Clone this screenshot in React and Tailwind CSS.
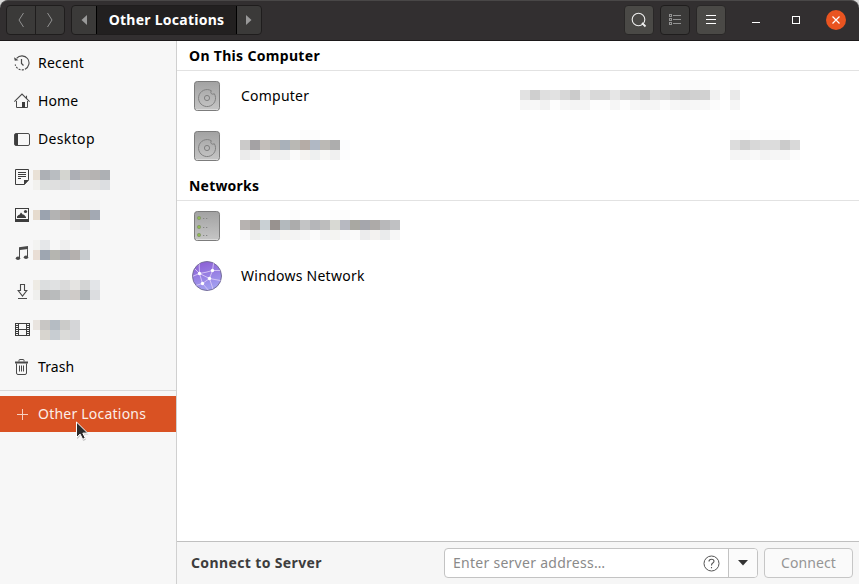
import React from "react";

/* A censored strip of text: rows of 10px cells, [column, y, ...fills]. */
function Mosaic({ width, height, rows, lead = 10, className = "" }) {
  return (
    <svg width={width} height={height} className={`block shrink-0 ${className}`} shapeRendering="crispEdges">
      {rows.map(([col, y, ...fills]) =>
        fills.map((fill, i) => {
          const c = col + i;
          return fill === "" ? null : (
            <rect key={`${c}-${y}`} x={c === 0 ? 0 : lead + (c - 1) * 10} y={y} width={c === 0 ? lead : 10} height={10} fill={fill} />
          );
        })
      )}
    </svg>
  );
}

const icons = {
  recent: (
    <g fill="none" stroke="#4a4a4a">
      <path d="M2.6 3.4A7 7 0 1 1 1.2 9.500" strokeWidth="1.1" strokeDasharray="25 1.2 2 1.2 2 1.2 2 1.2 2 1.2" />
      <path d="M7.5 4v4.5l2 2" strokeWidth="1.2" />
      <path d="M0 2.2l.8 3.5 3.7-.5z" fill="#4a4a4a" stroke="none" />
    </g>
  ),
  home: (
    <g fill="none" stroke="#4a4a4a">
      <path d="M.4 8.6L8 1l7.6 7.6M12.5 2.8v2.4" strokeWidth="1.1" />
      <path d="M2.5 8v6.5h11V8" />
      <path d="M8 9h3v6H8z" fill="#3d3d3d" stroke="none" />
    </g>
  ),
  desktop: (
    <g>
      <rect x=".5" y="2.5" width="15" height="12" rx="1.5" fill="none" stroke="#4a4a4a" />
      <path d="M1 3h3v11H1z" fill="#3d3d3d" />
    </g>
  ),
  documents: (
    <g>
      <path d="M1.5.5h13v10.3l-4.2 4.7H1.5z" fill="none" stroke="#3d3d3d" />
      <path d="M4 3.5h8M4 5.5h8M4 7.5h8M4 9.5h3" stroke="#3d3d3d" />
      <path d="M10 11h5l-5 5z" fill="#3d3d3d" />
    </g>
  ),
  pictures: (
    <g fill="#3d3d3d">
      <path d="M1 1h14v14H1zM2 2v10h12V2z" fillRule="evenodd" />
      <circle cx="11.5" cy="4.5" r="1.6" />
      <path d="M3 11V9.6L4.5 8l1-.3L7 5.5l2 2.3.8-.3L12 10v1z" />
    </g>
  ),
  music: (
    <g fill="#4a4a4a">
      <path d="M5 2.2L14 1v3L6 5v8H5zM13 3h1v9h-1z" />
      <ellipse cx="4" cy="13.2" rx="2.2" ry="1.8" />
      <ellipse cx="12" cy="12.2" rx="2.2" ry="1.8" />
    </g>
  ),
  downloads: (
    <path d="M6.500 1.500h4v6h2.300L8.500 13 4.200 7.500h2.300zM4 15.500h9" fill="none" stroke="#4a4a4a" strokeWidth="1.1" />
  ),
  videos: (
    <g fill="none" stroke="#3d3d3d" shapeRendering="crispEdges">
      <path d="M4.500 2.500h8v12h-8zM4 8.500h9" />
      <path d="M1.500 2v13M15.500 2v13" />
      <path d="M2.500 2v13M3.500 2v13M13.500 2v13M14.500 2v13" strokeDasharray="1 1" />
    </g>
  ),
  trash: (
    <g fill="none" stroke="#4a4a4a">
      <path d="M1 3.500h13" strokeWidth="2" />
      <path d="M5 2.500V1.300q0-.8.800-.8h3.400q.8 0 .8.800v1.200" />
      <path d="M2.500 4.500v9.500q0 1.500 1.500 1.500h7q1.500 0 1.500-1.500V4.500" />
      <path d="M5.500 6.500v6M7.500 6.500v6M9.500 6.500v6" />
    </g>
  ),
};

const censored = {
  documents: [
    [0, 12, "#e9e1d6", "#adb0b5", "#b9bdc1", "#d4d5d0", "#adafb5", "#bab8b7", "#b5b3b2", "#adb0b4"],
    [0, 22, "#f2f1ee", "#dfe1e0", "#dfdfdf", "#dbdcdd", "#e1e2e4", "#e2e1e0", "#e2e2e2", "#dcdee1"],
  ],
  pictures: [
    [5, 4, "#f3f3f3", "#f3f3f3"],
    [0, 14, "#e6dbce", "#9ba3af", "#b3b3b3", "#afaaa7", "#a0a1a3", "#a29f99", "#a3a9b3"],
    [4, 24, "#eeedec", "#e8e9eb"],
  ],
  music: [
    [0, 6, "#f3f3f1", "#e5e7e9", "", "#efefef"],
    [0, 16, "#e9ded5", "#9ea6b1", "#b5b5b0", "#a9aaaf", "#b4b0ae", "#c7cbce"],
  ],
  downloads: [
    [0, 8, "#eeebe4", "#dcdedf", "#e0e1e2", "#dadada", "#e5e4e2", "#d3d4d4", "#e3e5e8"],
    [0, 18, "#efefed", "#b7b7b7", "#b9bbbc", "#cccccc", "#cfcbc8", "#b0b5b8", "#dcdde0"],
  ],
  videos: [
    [0, 10, "#e9e4df", "#c8c6c4", "#b5bcc3", "#cbcbc9", "#d5d6d8"],
    [1, 20, "#d8d5cf", "#c8cdd2", "#dbdbd9", "#d5d6d8"],
  ],
};

const places = [
  ["recent", "Recent", "tracking-[0.2px]"],
  ["home", "Home", "tracking-[0.1px]"],
  ["desktop", "Desktop", "tracking-[0.35px]"],
  ["documents"],
  ["pictures"],
  ["music"],
  ["downloads"],
  ["videos"],
  ["trash", "Trash", "tracking-[0.1px]"],
];

function Sidebar() {
  return (
    <aside className="flex w-[177px] shrink-0 flex-col border-r border-[#d0d0d0] bg-[#f7f7f7] pt-[3px]">
      {places.map(([id, label, tracking]) => (
        <div key={id} className="flex h-[38px] shrink-0 items-center pl-[14px]">
          <svg width="16" height="16" viewBox="0 0 16 16" className="shrink-0">{icons[id]}</svg>
          {label ? (
            <span className={`ml-2 ${tracking}`}>{label}</span>
          ) : (
            <Mosaic width={80} height={38} lead={7} rows={censored[id]} className="ml-[3px]" />
          )}
        </div>
      ))}
      <div className="mt-[4px] h-px shrink-0 bg-[#d9d9d9]" />
      <div className="relative mt-[5px] flex h-9 shrink-0 items-center bg-[#d95223] pl-[14px] text-[#fbeee9]">
        <svg width="16" height="16" viewBox="0 0 16 16" className="shrink-0">
          <path d="M3 8.500h11M8.500 3v11" stroke="#f6cfc0" />
        </svg>
        <span className="ml-2 tracking-[0.22px]">Other Locations</span>
        <svg width="16" height="22" viewBox="0 0 16 22" className="absolute left-[75px] top-[25px]">
          <path d="M1.500 1v16l3.600-3.500 2.500 5.300 2.700-1.200-2.400-5.200h5z" fill="#999" opacity=".5" transform="translate(.6 1.200)" />
          <path d="M1.500 1v15.500l3.600-3.400 2.600 5.200 2.600-1.200-2.500-5h4.900z" fill="#2b2b2b" stroke="#fff" strokeWidth="1" />
        </svg>
      </div>
    </aside>
  );
}

function DriveIcon({ server }) {
  return (
    <svg width="32" height="32" viewBox="0 0 32 32" className="shrink-0">
      <defs>
        <linearGradient id="metal" x1="0" y1="0" x2="0" y2="1">
          <stop offset="0" stopColor="#a2a2a2" />
          <stop offset="1" stopColor="#c6c6c6" />
        </linearGradient>
      </defs>
      <rect x="3.500" y="1.500" width="25" height="29" rx="2.800" fill="url(#metal)" stroke="#7c7c7c" />
      <path d="M5 29.500h22" stroke="#dadada" />
      {server ? (
        [8, 17, 25].map((y) => (
          <g key={y}>
            <circle cx="8" cy={y} r="1.700" fill="#8fba50" stroke="#83916f" strokeWidth=".7" />
            <path d={`M12 ${y + 0.5}h1.300M15 ${y + 0.5}h1.300`} stroke="#858585" />
          </g>
        ))
      ) : (
        <g fill="none" stroke="#808080">
          <path d="M20.300 10.700A8.500 8.500 0 1 0 23.400 13.800M20.300 10.700q-1.100 1.800 0 2.900t3.100.2" />
          <circle cx="16" cy="18" r="2.600" />
        </g>
      )}
    </svg>
  );
}

function NetworkIcon() {
  return (
    <svg width="32" height="32" viewBox="0 0 32 32" className="shrink-0">
      <defs>
        <linearGradient id="globe" x1="0" y1="0" x2=".3" y2="1">
          <stop offset="0" stopColor="#8a58d2" />
          <stop offset="1" stopColor="#a29ff0" />
        </linearGradient>
        <clipPath id="disc"><circle cx="16" cy="16" r="14.200" /></clipPath>
      </defs>
      <circle cx="16" cy="16" r="14.500" fill="url(#globe)" stroke="#77709a" />
      <g clipPath="url(#disc)" fill="none" stroke="#d8c8f5" strokeWidth=".9">
        <path d="M8 0L8.500 13.500Q15 12.500 21.500 10.500L23 0M8.500 13.500L0 17M8.500 13.500L18.500 18.500L21.500 10.500L32 10.500M8.500 13.500L11.500 23.500L18.500 18.500L32 21M11.500 23.500L3 26M11.500 23.500L19 32M18.500 18.500L23 32M8.500 13.500L3 8" />
      </g>
      <g fill="#fff">
        <circle cx="8.500" cy="13.500" r="1.700" />
        <circle cx="21.500" cy="10.500" r="1.700" />
        <circle cx="18.500" cy="18.500" r="1.700" />
        <circle cx="11.500" cy="23.500" r="1.700" />
      </g>
    </svg>
  );
}

function Row({ icon, children }) {
  return <div className="flex h-[50px] shrink-0 items-center pl-[14px]">{icon}{children}</div>;
}

function Heading({ children, tracking }) {
  return (
    <h2 className={`flex h-[30px] shrink-0 items-center border-b border-[#e2e2e2] pl-3 font-bold text-black ${tracking}`}>{children}</h2>
  );
}

function Locations() {
  return (
    <section className="flex flex-1 flex-col bg-white">
      <Heading tracking="tracking-[0.32px]">On This Computer</Heading>
      <Row icon={<DriveIcon />}>
        <span className="ml-[18px] w-[279px] tracking-[0.22px]">Computer</span>
        <Mosaic width={230} height={50} rows={[
          [6, 9, "#fcfcfc"], [16, 9, "#fbfbfb", "#fbfbfb", "#fbfbfb"], [21, 9, "#fcfcfc"],
          [0, 19, "#e2e2e2", "#cfcfcf", "#dfdfdf", "#e2e2e2", "#d7d7d7", "#cbcbcb", "#e9e9e9", "#d9d9d9", "#d9d9d9", "#e6e6e6", "#d9d9d9", "#d7d7d7", "#cbcbcb", "#dedede", "#dbdbdb", "#d2d2d2", "#cdcdcd", "#d0d0d0", "#d1d1d1", "#f2f2f2", "", "#e9e9e9"],
          [0, 29, "#f6f6f6", "#f8f8f8", "#f2f2f2", "#fdfdfd", "#f7f7f7", "#f4f4f4", "#f4f4f4", "#fdfdfd", "#fdfdfd", "#f6f6f6", "#fdfdfd", "#f7f7f7", "#f5f5f5", "#f5f5f5", "#fcfcfc", "#f7f7f7", "#f5f5f5", "#f7f7f7", "#f8f8f8", "#fcfcfc", "", "#f6f6f6"],
        ]} />
      </Row>
      <Row icon={<DriveIcon />}>
        <Mosaic width={490} height={50} className="ml-[17px]" rows={[
          [6, 9, "#fcfcfc", "#fcfcfc"],
          [0, 19, "#cbcac9", "#a4a2a4", "#c2beba", "#b6b5b3", "#a9b1ba", "#b9b8b4", "#b5aca6", "#b0b8c4", "#bbb9b5", "#adadad", "#fbfcfe"],
          [0, 29, "#ebebeb", "#f1f1f1", "#fafafa", "#efefef", "#f0f1f1", "#fafafa", "#f5f3f1", "#eef0f0", "#f7f7f5", "#f0f0f0", "#fdfdfe"],
        ]} />
        <Mosaic width={80} height={50} rows={[
          [0, 9, "#fdfdfd", "#fcfcfc", "", "#fdfdfd", "#fdfdfd", "#fdfdfd"],
          [0, 19, "#dcdcdc", "#cfcfcf", "#d8d8d8", "#dcdcdc", "#dcdcdc", "#cbcbcb", "#d9d9d9"],
          [0, 29, "#f5f5f5", "#f6f6f6", "#f9f9f9", "#f3f3f3", "#f6f6f6", "#f6f6f6", "#fcfcfc"],
        ]} />
      </Row>
      <Heading tracking="tracking-[0.2px]">Networks</Heading>
      <Row icon={<DriveIcon server />}>
        <Mosaic width={160} height={50} className="ml-[17px]" rows={[
          [5, 9, "#fcfcfc"], [9, 9, "#fdfdfd", "#fcfcfc"],
          [0, 19, "#b7b3b1", "#aca8a5", "#c9d0d4", "#98928f", "#b3b9bd", "#acacac", "#c3c4c5", "#b5b6b9", "#bdbdbd", "#d8d9d3", "#b7b9c1", "#a9a8a2", "#a5a6ac", "#adaaa8", "#b8b8ba", "#c0c1c3"],
          [0, 29, "#fafafb", "#eeefee", "#f1f3f4", "#eff0f2", "#f5f4f2", "#f3f3f3", "#f6f6f6", "#fbfbfb", "#f4f4f4", "#f4f4f2", "#f8f8f9", "#fafafa", "#ececed", "#f3f2f0", "#eaebec", "#f7f7f7"],
        ]} />
      </Row>
      <Row icon={<NetworkIcon />}>
        <span className="ml-[18px] tracking-[0.26px]">Windows Network</span>
      </Row>
    </section>
  );
}

function ConnectBar() {
  return (
    <footer className="flex h-[43px] shrink-0 items-center border-t border-[#c0c0c0] bg-[#f6f6f6] pl-[14px] pr-[6px] text-[#3d3d3d]">
      <span className="flex-1 font-bold tracking-[0.37px]">Connect to Server</span>
      <div className="flex h-[30px] w-[314px] rounded-[4px] border border-[#c3c3c3] bg-white">
        <span className="flex flex-1 items-center pl-2 tracking-[0.27px] text-[#8a8a8a]">Enter server address…</span>
        <div className="flex w-[25px] items-center">
          <svg width="17" height="17" viewBox="0 0 17 17" fill="none" stroke="#555">
            <circle cx="8.500" cy="8.500" r="7.500" />
            <path d="M6 6.500q0-2.300 2.500-2.300t2.500 2q0 1.100-1.500 2-1 .7-1 2.300M8.500 12v1.300" strokeWidth="1.100" />
          </svg>
        </div>
        <div className="flex w-[29px] items-center justify-center rounded-r-[3px] border-l border-[#c3c3c3] bg-[#fbfbfb]">
          <svg width="10" height="6" viewBox="0 0 10 6"><path d="M0 0h10L5 5.500z" fill="#333" /></svg>
        </div>
      </div>
      <div className="ml-[6px] flex h-[30px] w-[89px] items-center justify-center rounded-[4px] border border-[#c6c6c6] bg-[#fafafa] tracking-[0.1px] text-[#959595]">Connect</div>
    </footer>
  );
}

function HeaderBar() {
  return (
    <header className="flex h-[41px] shrink-0 items-center rounded-t-[8px] border-b border-t border-b-[#1c191a] border-t-[#494747] bg-[#322f30] pb-px pl-[6px] pr-[13px]">
      <div className="flex h-[30px] w-[59px] rounded-[4px] border border-[#1f1d1d] bg-[#3b3a39]">
        <div className="flex flex-1 items-center justify-center border-r border-[#1f1d1d]">
          <svg width="8" height="16" viewBox="0 0 8 16"><path d="M6.500 1L2 8l4.500 7" fill="none" stroke="#929292" /></svg>
        </div>
        <div className="flex flex-1 items-center justify-center">
          <svg width="8" height="16" viewBox="0 0 8 16"><path d="M1.500 1L6 8l-4.500 7" fill="none" stroke="#929292" /></svg>
        </div>
      </div>
      <div className="ml-[6px] flex h-[30px] w-[191px] overflow-hidden rounded-[4px] border border-[#1f1d1d] bg-[#3b3a39]">
        <div className="flex w-6 items-center justify-center">
          <svg width="6" height="10" viewBox="0 0 6 10"><path d="M6 0v10L.5 5z" fill="#999" /></svg>
        </div>
        <div className="flex w-[141px] items-center justify-center border-x border-black bg-[#222020] font-bold tracking-[0.26px] text-white">Other Locations</div>
        <div className="flex flex-1 items-center justify-center">
          <svg width="6" height="10" viewBox="0 0 6 10"><path d="M0 0v10l5.500-5z" fill="#999" /></svg>
        </div>
      </div>
      <div className="ml-auto flex gap-[6px]">
        <div className="flex h-[30px] w-[30px] items-center justify-center rounded-[4px] border border-[#292727] bg-[#4a4946]">
          <svg width="16" height="16" viewBox="0 0 16 16" fill="none" stroke="#eee">
            <circle cx="7.500" cy="7.500" r="6.300" strokeWidth="1.100" />
            <path d="M11 11l3.500 3.500" strokeWidth="1.800" />
          </svg>
        </div>
        <div className="flex h-[30px] w-[30px] items-center justify-center rounded-[4px] border border-[#1f1d1d] bg-[#3b3a39]">
          <svg width="12" height="12" viewBox="0 0 12 12" fill="none" stroke="#929292" shapeRendering="crispEdges">
            <path d="M.5.500h2v2h-2zM.5 4.500h2v2h-2zM.5 8.500h2v2h-2zM4 1.500h8M4 5.500h8M4 9.500h8" />
          </svg>
        </div>
        <div className="flex h-[30px] w-[30px] items-center justify-center rounded-[4px] border border-[#292727] bg-[#4a4946]">
          <svg width="10" height="10" viewBox="0 0 10 10" stroke="#fff" shapeRendering="crispEdges"><path d="M0 .500h10M0 4.500h10M0 8.500h10" /></svg>
        </div>
      </div>
      <div className="ml-[26px] mt-[5px] h-px w-2 bg-white" />
      <div className="ml-8 h-2 w-2 border border-white" />
      <div className="ml-[26px] flex h-5 w-5 items-center justify-center rounded-full bg-[#e95420]">
        <svg width="8" height="8" viewBox="0 0 8 8" stroke="#fff" strokeWidth="1.200"><path d="M.5.500l7 7M7.500.500l-7 7" /></svg>
      </div>
    </header>
  );
}

export default function App() {
  return (
    <div className="flex h-[584px] w-[859px] flex-col overflow-hidden bg-[#d9d9d9] font-['Noto_Sans',sans-serif] text-[14px] leading-5 text-black">
      <HeaderBar />
      <div className="flex flex-1">
        <Sidebar />
        <main className="flex flex-1 flex-col">
          <Locations />
          <ConnectBar />
        </main>
      </div>
    </div>
  );
}
